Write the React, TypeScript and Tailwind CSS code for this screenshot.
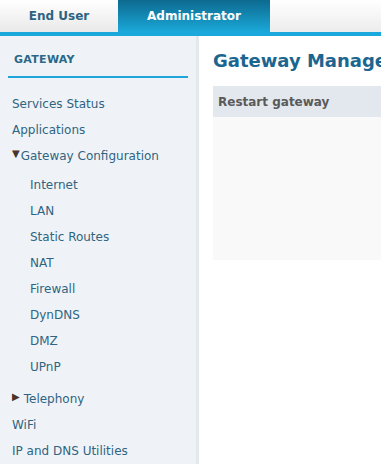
const menu = [
  { label: "Services Status" },
  { label: "Applications" },
];

const gatewayItems = ["Internet", "LAN", "Static Routes", "NAT", "Firewall", "DynDNS", "DMZ", "UPnP"];

export default function App() {
  return (
    <div
      className="w-[381px] h-[464px] overflow-hidden bg-white flex flex-col"
      style={{ fontFamily: '"DejaVu Sans", Verdana, sans-serif' }}
    >
      {/* tabs */}
      <div className="flex h-[32px] shrink-0 bg-gradient-to-b from-white to-[#ececec]">
        <div className="w-[118px] flex items-center justify-center text-[12px] font-bold text-[#2d6381] bg-gradient-to-b from-white to-[#e9e9e9]">
          End User
        </div>
        <div className="w-[152px] flex items-center justify-center text-[12px] font-bold text-white bg-gradient-to-b from-[#0d6a8f] to-[#1aa9da]">
          Administrator
        </div>
        <div className="flex-1" />
      </div>
      <div className="h-[4px] shrink-0 bg-[#1ba8dc]" />

      <div className="flex flex-1">
        {/* sidebar */}
        <div className="w-[199px] shrink-0 bg-[#eff3f7] border-r-[3px] border-[#e3e8ed] text-[12px] text-[#2f6482]">
          <div className="mx-[8px] mt-[16px] pl-[6px] pb-[7px] border-b-2 border-[#20a6da] text-[11px] font-bold text-[#2a6888] tracking-[0.3px]">
            GATEWAY
          </div>
          <div className="pl-[12px] pt-[13px]">
            {menu.map((m) => (
              <div key={m.label} className="h-[26px] leading-[26px]">{m.label}</div>
            ))}
            <div className="h-[26px] leading-[26px] flex items-center">
              <span className="text-[#4a3328] text-[10px] mr-[1px] -mt-[3px]">▼</span>
              Gateway Configuration
            </div>
            <div className="pl-[18px] pt-[3px]">
              {gatewayItems.map((g) => (
                <div key={g} className="h-[26px] leading-[26px]">{g}</div>
              ))}
            </div>
            <div className="h-[26px] leading-[26px] flex items-center mt-[6px]">
              <span className="text-[#4a3328] text-[10px] mr-[4px] -mt-[3px]">▶</span>
              Telephony
            </div>
            <div className="h-[26px] leading-[26px]">WiFi</div>
            <div className="h-[26px] leading-[26px]">IP and DNS Utilities</div>
          </div>
        </div>

        {/* content */}
        <div className="flex-1 pl-[14px] pt-[11px] overflow-hidden">
          <div className="text-[18px] font-bold text-[#1b6690] whitespace-nowrap">Gateway Manage</div>
          <div className="mt-[12px] h-[31px] bg-[#e3e8ee] flex items-center pl-[5px] text-[12px] font-bold text-[#5a5a5a] whitespace-nowrap">
            Restart gateway
          </div>
          <div className="h-[143px] bg-[#f9f9f9]" />
        </div>
      </div>
    </div>
  );
}
